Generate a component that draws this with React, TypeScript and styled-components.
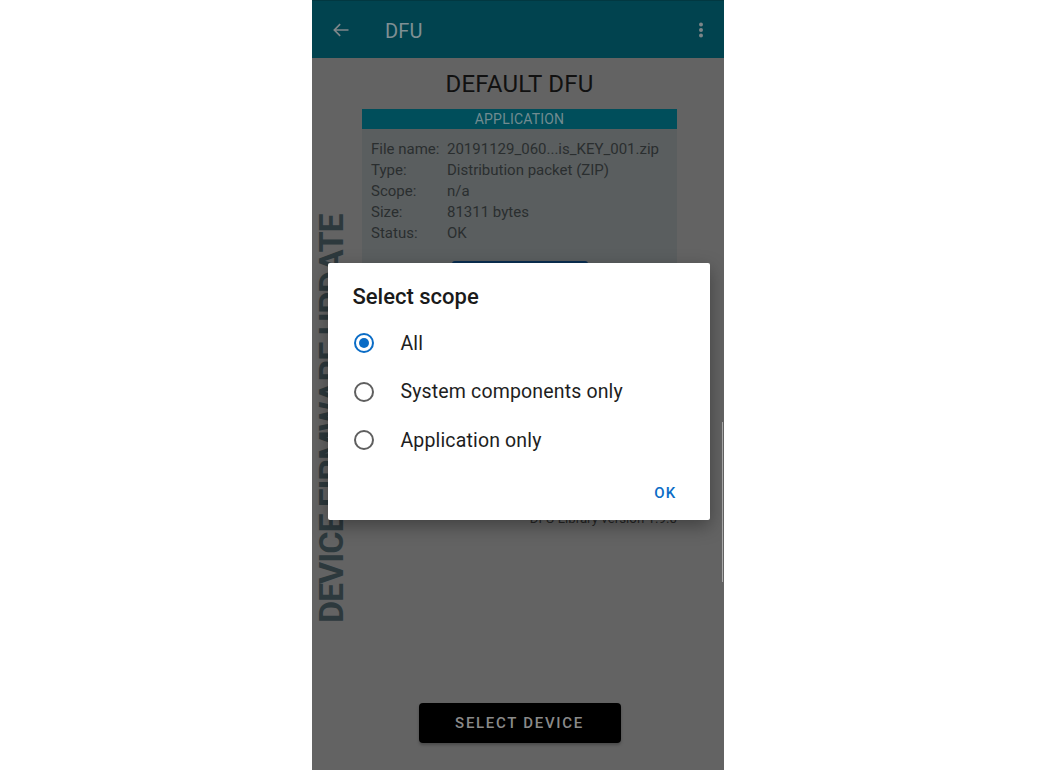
import React from "react";
import styled, { createGlobalStyle } from "styled-components";

const Global = createGlobalStyle`
  html, body { margin: 0; padding: 0; background: #ffffff; }
  body { font-family: Roboto, "Noto Sans", "Liberation Sans", sans-serif; }
  * { box-sizing: border-box; }
`;

const Page = styled.div`
  width: 1038px;
  height: 770px;
  display: flex;
  justify-content: center;
`;

const Phone = styled.div`
  position: relative;
  width: 412px;
  height: 770px;
  display: flex;
  flex-direction: column;
  background: #636363;
  overflow: hidden;
  margin-left: -2px;
`;

const AppBar = styled.div`
  height: 58px;
  flex: none;
  display: flex;
  align-items: center;
  background: #01434f;
  border-top: 1px solid #023841;
  padding: 0 12px 0 18px;
`;

const IconBtn = styled.div`
  width: 22px;
  height: 22px;
  display: flex;
  align-items: center;
  justify-content: center;
`;

const BarTitle = styled.div`
  margin-left: 33px;
  flex: 1;
  font-size: 20px;
  color: #7f8f93;
  letter-spacing: 0.2px;
  padding-top: 2px;
`;

const Body = styled.div`
  flex: 1;
  display: grid;
  grid-template-columns: 50px 1fr;
`;

const Side = styled.div`
  display: flex;
  justify-content: flex-start;
  padding: 157px 0 0 4px;
`;

const Vertical = styled.div`
  writing-mode: vertical-rl;
  transform: rotate(180deg);
  font-weight: 700;
  font-size: 34px;
  letter-spacing: -1.05px;
  color: #2d393d;
  line-height: 31px;
  height: 408px;
  white-space: nowrap;
`;

const Main = styled.div`
  display: flex;
  flex-direction: column;
  align-items: stretch;
  padding: 12px 47px 27px 0;
`;

const Heading = styled.div`
  text-align: center;
  font-size: 24px;
  color: #111111;
  line-height: 28px;
  height: 39px;
  letter-spacing: 0.2px;
`;

const Card = styled.div`
  background: #5a5e5f;
  height: 358px;
  display: flex;
  flex-direction: column;
`;

const CardHead = styled.div`
  height: 20px;
  background: #004e5b;
  color: #718b90;
  font-size: 14px;
  line-height: 21px;
  text-align: center;
  letter-spacing: 0.2px;
`;

const InfoGrid = styled.div`
  display: grid;
  grid-template-columns: 76px 1fr;
  padding: 10px 0 0 9px;
  font-size: 15px;
  line-height: 21px;
  color: #2a2e2f;
`;

const BlueBtn = styled.div`
  align-self: center;
  margin-top: 17px;
  width: 136px;
  height: 36px;
  border-radius: 3px;
  background: #0a2f52;
`;

const Version = styled.div`
  text-align: right;
  font-size: 13.3px;
  color: #262626;
  margin-top: 44px;
  line-height: 16px;
`;

const Spacer = styled.div`
  flex: 1;
`;

const SelectBtn = styled.div`
  align-self: center;
  width: 202px;
  height: 40px;
  border-radius: 4px;
  background: #000000;
  color: #8a8a8a;
  font-size: 15px;
  font-weight: 500;
  letter-spacing: 1.7px;
  display: flex;
  align-items: center;
  justify-content: center;
  box-shadow: 0 2px 3px rgba(0, 0, 0, 0.25);
`;

const ScrollHint = styled.div`
  position: absolute;
  right: 1px;
  top: 422px;
  width: 1px;
  height: 160px;
  background: #a9a9a9;
`;

const Overlay = styled.div`
  position: absolute;
  inset: 0;
  display: flex;
  align-items: center;
  justify-content: center;
  padding-top: 13px;
  padding-left: 1px;
`;

const Dialog = styled.div`
  width: 382px;
  height: 257px;
  background: #ffffff;
  border-radius: 2px;
  box-shadow: 0 6px 18px rgba(0, 0, 0, 0.35);
  display: flex;
  flex-direction: column;
  padding: 20px 0 0 0;
`;

const DialogTitle = styled.div`
  font-size: 22px;
  font-weight: 500;
  color: #1a1a1a;
  padding-left: 25px;
  line-height: 28px;
  margin-bottom: 8px;
`;

const Option = styled.div`
  display: flex;
  align-items: center;
  height: 48.5px;
  padding-left: 26px;
`;

const Radio = styled.div<{ $on?: boolean }>`
  width: 20px;
  height: 20px;
  border-radius: 50%;
  border: 2px solid ${(p) => (p.$on ? "#0a6cc6" : "#5f5f5f")};
  display: flex;
  align-items: center;
  justify-content: center;
  &::after {
    content: "";
    width: 10px;
    height: 10px;
    border-radius: 50%;
    background: ${(p) => (p.$on ? "#0a6cc6" : "transparent")};
  }
`;

const OptionLabel = styled.div`
  margin-left: 27px;
  font-size: 19.5px;
  color: #1e1e1e;
  letter-spacing: 0.15px;
`;

const Actions = styled.div`
  flex: 1;
  display: flex;
  justify-content: flex-end;
  align-items: flex-end;
  padding: 0 33px 18px 0;
`;

const OkBtn = styled.div`
  font-size: 15px;
  font-weight: 500;
  color: #0a6cc6;
  letter-spacing: 1.2px;
`;

const rows: [string, string][] = [
  ["File name:", "20191129_060...is_KEY_001.zip"],
  ["Type:", "Distribution packet (ZIP)"],
  ["Scope:", "n/a"],
  ["Size:", "81311 bytes"],
  ["Status:", "OK"],
];

export default function App() {
  return (
    <Page>
      <Global />
      <Phone>
        <AppBar>
          <IconBtn>
            <svg width="20" height="20" viewBox="0 0 24 24" fill="none" stroke="#80878a" strokeWidth="2">
              <path d="M21 12H4M11 5l-7 7 7 7" />
            </svg>
          </IconBtn>
          <BarTitle>DFU</BarTitle>
          <IconBtn>
            <svg width="6" height="16" viewBox="0 0 6 16">
              <circle cx="3" cy="2.5" r="2" fill="#7c8588" />
              <circle cx="3" cy="8" r="2" fill="#7c8588" />
              <circle cx="3" cy="13.5" r="2" fill="#7c8588" />
            </svg>
          </IconBtn>
        </AppBar>
        <Body>
          <Side>
            <Vertical>DEVICE FIRMWARE UPDATE</Vertical>
          </Side>
          <Main>
            <Heading>DEFAULT DFU</Heading>
            <Card>
              <CardHead>APPLICATION</CardHead>
              <InfoGrid>
                {rows.map(([k, v]) => (
                  <React.Fragment key={k}>
                    <span>{k}</span>
                    <span>{v}</span>
                  </React.Fragment>
                ))}
              </InfoGrid>
              <BlueBtn />
            </Card>
            <Version>DFU Library version 1.9.0</Version>
            <Spacer />
            <SelectBtn>SELECT DEVICE</SelectBtn>
          </Main>
        </Body>
        <ScrollHint />
        <Overlay>
          <Dialog>
            <DialogTitle>Select scope</DialogTitle>
            <Option>
              <Radio $on />
              <OptionLabel>All</OptionLabel>
            </Option>
            <Option>
              <Radio />
              <OptionLabel>System components only</OptionLabel>
            </Option>
            <Option>
              <Radio />
              <OptionLabel>Application only</OptionLabel>
            </Option>
            <Actions>
              <OkBtn>OK</OkBtn>
            </Actions>
          </Dialog>
        </Overlay>
      </Phone>
    </Page>
  );
}
